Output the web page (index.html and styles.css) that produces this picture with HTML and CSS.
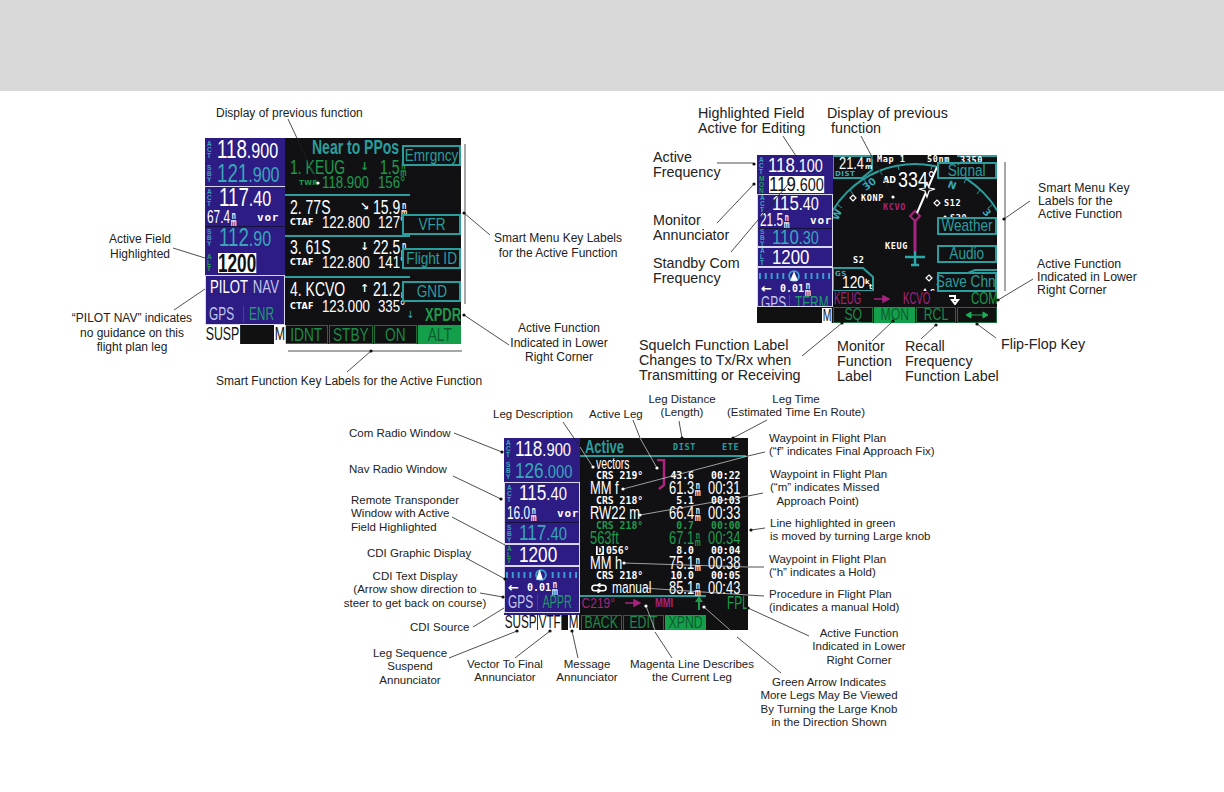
FILE: index.html
```html
<!DOCTYPE html>
<html lang="en">

<head>
    <meta charset="UTF-8">
    <title>Radio and flight plan pages</title>
    <link rel="stylesheet" href="styles.css">
</head>

<body>
    <div id="page">
        <div class="topband"></div>

        <!-- screen 1: nearest airports -->
        <div class="screen s1">
            <div class="radios">
                <div class="rbox h48">
                    <div class="fr"><span class="tag">ACT</span><span class="big w">118<small>.900</small></span></div>
                    <div class="fr"><span class="tag">SBY</span><span class="big t">121<small>.900</small></span></div>
                </div>
                <div class="rbox h65 tl">
                    <div class="fr r22"><span class="tag">ACT</span><span class="big w ind">117<small>.40</small></span></div>
                    <div class="info"><span class="mid w">67.4<i class="nm">n<br>m</i></span><span class="vor">vor</span></div>
                    <div class="fr r22"><span class="tag">SBY</span><span class="big t ind">112<small>.90</small></span></div>
                </div>
                <div class="rbox h24">
                    <div class="fr"><span class="tag g">ALT</span><span class="big sel">1200</span></div>
                </div>
                <div class="rbox h50 ol">
                    <div class="pn"><span class="mid w">PILOT <span class="t2">NAV</span></span></div>
                    <div class="src"><span class="mid t2">GPS</span><span class="mid gr2">ENR</span></div>
                </div>
            </div>
            <div class="data">
                <div class="title"><span class="nw">Near to PPos</span></div>
                <div class="apt a-top gn">
                    <div class="l1"><span class="nw">1. KEUG</span><span class="arr">&#8595;</span><span class="nw val">1.5<i class="nm">n<br>m</i></span></div>
                    <div class="l2"><b class="tw">TWR</b><span class="nw">118.900</span><span class="nw">156&deg;</span></div>
                </div>
                <div class="apt">
                    <div class="l1"><span class="nw">2. 77S</span><span class="arr">&#8600;</span><span class="nw">15.9<i class="nm">n<br>m</i></span></div>
                    <div class="l2"><b>CTAF</b><span class="nw">122.800</span><span class="nw">127&deg;</span></div>
                </div>
                <div class="apt a-3">
                    <div class="l1"><span class="nw">3. 61S</span><span class="arr">&#8595;</span><span class="nw">22.5<i class="nm">n<br>m</i></span></div>
                    <div class="l2"><b>CTAF</b><span class="nw">122.800</span><span class="nw">141&deg;</span></div>
                </div>
                <div class="apt last">
                    <div class="l1"><span class="nw">4. KCVO</span><span class="arr">&#8593;</span><span class="nw">21.2<i class="nm">n<br>m</i></span></div>
                    <div class="l2"><b>CTAF</b><span class="nw">123.000</span><span class="nw">335&deg;</span></div>
                </div>
            </div>
            <div class="botleft bl1"><span class="chip">SUSP</span><span class="chip">M</span></div>
            <div class="keys k4">
                <span><b>IDNT</b></span><span><b>STBY</b></span><span><b>ON</b></span><span class="on"><b>ALT</b></span>
            </div>
            <span class="mk e1"><b>Emrgncy</b></span>
            <span class="mk e2"><b>VFR</b></span>
            <span class="mk e3"><b>Flight ID</b></span>
            <span class="mk e4"><b>GND</b></span>
            <span class="xarr">&#8595;</span>
            <span class="xfn">XPDR</span>
        </div>

        <!-- screen 2: map with com active -->
        <div class="screen s2">
            <div class="radios">
                <div class="rbox h39">
                    <div class="fr r21"><span class="tag">ACT</span><span class="big w">118<small>.100</small></span></div>
                    <div class="fr r17"><span class="tag g">MON</span><span class="big sel">119<small>.600</small></span></div>
                </div>
                <div class="rbox h53 ol">
                    <div class="fr r17"><span class="tag">ACT</span><span class="big w ind">115<small>.40</small></span></div>
                    <div class="info"><span class="mid w">21.5<i class="nm">n<br>m</i></span><span class="vor">vor</span></div>
                    <div class="fr r17"><span class="tag">SBY</span><span class="big t ind">110<small>.30</small></span></div>
                </div>
                <div class="rbox h20 ol">
                    <div class="fr r18"><span class="tag">ALT</span><span class="big w ind">1200</span></div>
                </div>
                <div class="rbox h40 ol">
                    <svg class="cdi" viewBox="0 0 75 12"><g class="cdi-t"><path d="M2 3v6M8 3v6M14 3v6M20 3v6M26 3v6M49 3v6M55 3v6M61 3v6M67 3v6M73 3v6"/><circle cx="37" cy="6" r="5"/></g><path class="cdi-w" d="M37 1l4 10h-8z"/></svg>
                    <div class="xtk"><span class="lar">&#8592;</span><span class="mono">0.01</span><span class="nw"><i class="nm">n<br>m</i></span></div>
                    <div class="src"><span class="mid t2">GPS</span><span class="mid gr2">TERM</span></div>
                </div>
            </div>
            <div class="mapwrap">
                <svg class="map" viewBox="833 155 164 152">
                    <circle class="arc" cx="915" cy="260" r="96" />
                    <path class="tick" d="M838 205l4 3M850 190l3 4M864 179l2 4M880 171l2 4M898 166l1 4M932 166l-1 4M950 171l-2 4M966 179l-2 4M980 190l-3 4M992 205l-4 3" />
                    <path class="box" d="M833 156h39v14l-10 8h-29z" />
                    <path class="box" d="M957 156h40" />
                    <text class="sv w" x="839" y="169" textLength="25" lengthAdjust="spacingAndGlyphs">21.4</text>
                    <text class="tiny w" x="866" y="162">n</text>
                    <text class="tiny w" x="865" y="169">m</text>
                    <text class="tiny t" x="835" y="176">DIST</text>
                    <text class="lab" x="877" y="162">Map 1</text>
                    <text class="lab b" x="927" y="162">50nm</text>
                    <text class="lab" x="960" y="163">3350</text>
                    <text class="ad" x="883" y="183">AD</text>
                    <text class="hdg" x="898" y="187" textLength="37" lengthAdjust="spacingAndGlyphs">334&deg;</text>
                    <text class="nmb t" transform="translate(866 191) rotate(-38)">30</text>
                    <text class="nmb t" transform="translate(838 221) rotate(-68)">W</text>
                    <text class="nmb t" transform="translate(947 187) rotate(20)">N</text>
                    <text class="nmb t" transform="translate(982 212) rotate(50)">3</text>
                    <path class="wpt" d="M853 195l3 3-3 3-3-3zM937 200l3 3-3 3-3-3zM945 216l3 3-3 3-3-3zM929 275l3 3-3 3-3-3z" />
                    <text class="lab" x="861" y="201">KONP</text>
                    <text class="lab" x="944" y="206">S12</text>
                    <text class="lab" x="950" y="221">S20</text>
                    <text class="lab m" x="883" y="210">KCVO</text>
                    <text class="lab" x="885" y="249">KEUG</text>
                    <text class="lab" x="853" y="263">S2</text>
                    <text class="lab" x="930" y="296">SAL</text>
                    <path class="tri" d="M925 288l3 5h-6z" />
                    <path class="cse" d="M915 216v35" />
                    <path class="cse-d" d="M915 211l5 5-5 5-5-5z" />
                    <path class="trk" d="M917 213l20-46" />
                    <path class="wstar" d="M927 183l2 5 6 1-6 2-2 6-2-6-6-2 6-1z" />
                    <path class="plane" d="M905 257h20M915 251v14M911 265h8" />
                    <path class="box" d="M833 268h30l10 9v14h-40z" />
                    <path class="box" d="M968 273l7-3h22" />
                    <text class="tiny t" x="835" y="276">GS</text>
                    <text class="sv w" x="842" y="288" textLength="23" lengthAdjust="spacingAndGlyphs">120</text>
                    <text class="tiny w" x="865" y="284">k</text>
                    <text class="tiny w" x="869" y="289">t</text>
                </svg>
                <div class="legline">
                    <span class="mg nw">KEUG</span>
                    <svg class="mgarr" viewBox="0 0 16 8"><path d="M0 4h10M9 1l6 3-6 3z"/></svg>
                    <span class="mg nw">KCVO</span>
                    <svg class="turn" viewBox="0 0 11 11"><path d="M0 2h6v5M3 6h6l-3 4z"/></svg>
                    <span class="fn nw">COM</span>
                </div>
            </div>
            <div class="botleft bl2"><span></span><span class="chip">M</span></div>
            <div class="keys k4">
                <span><b>SQ</b></span><span class="on"><b>MON</b></span><span><b>RCL</b></span><span class="flip"><svg viewBox="0 0 22 8"><path d="M0 4l5-3v6zM22 4l-5-3v6zM4 4h14"/></svg></span>
            </div>
            <span class="mk m1"><b>Signal</b></span>
            <span class="mk m2"><b>Weather</b></span>
            <span class="mk m3"><b>Audio</b></span>
            <span class="mk m4"><b>Save Chnl</b></span>
        </div>

        <!-- screen 3: active flight plan -->
        <div class="screen s3">
            <div class="radios">
                <div class="rbox h44">
                    <div class="fr r22"><span class="tag">ACT</span><span class="big w">118<small>.900</small></span></div>
                    <div class="fr r22"><span class="tag">SBY</span><span class="big t">126<small>.000</small></span></div>
                </div>
                <div class="rbox h62 ol">
                    <div class="fr r21"><span class="tag">ACT</span><span class="big w ind">115<small>.40</small></span></div>
                    <div class="info"><span class="mid w">16.0<i class="nm">n<br>m</i></span><span class="vor">vor</span></div>
                    <div class="fr r21"><span class="tag">SBY</span><span class="big t ind">117<small>.40</small></span></div>
                </div>
                <div class="rbox h22 ol">
                    <div class="fr r20"><span class="tag g">ALT</span><span class="big w ind">1200</span></div>
                </div>
                <div class="rbox h47 ol">
                    <svg class="cdi" viewBox="0 0 75 12"><g class="cdi-t"><path d="M2 3v6M8 3v6M14 3v6M20 3v6M26 3v6M49 3v6M55 3v6M61 3v6M67 3v6M73 3v6"/><circle cx="37" cy="6" r="5"/></g><path class="cdi-w" d="M35 1h1l3 10h-7z"/></svg>
                    <div class="xtk"><span class="lar">&#8592;</span><span class="mono">0.01</span><span class="nw"><i class="nm">n<br>m</i></span></div>
                    <div class="src"><span class="mid t2">GPS</span><span class="mid gr2">APPR</span></div>
                </div>
            </div>
            <div class="fpl">
                <div class="fhead"><span class="ftitle nw">Active</span><span class="fcol d">DIST</span><span class="fcol">ETE</span></div>
                <div class="fvec"><span class="nw">vectors</span></div>
                <div class="frow"><span class="sm c">CRS 219&deg;</span><span class="sm r1">43.6</span><span class="sm r2">00:22</span></div>
                <div class="frow lg"><span class="nm1"><span class="nw">MM f</span></span><span><span class="nw">61.3<i class="nm">n<br>m</i></span></span><span><span class="nw">00:31</span></span></div>
                <div class="frow"><span class="sm c">CRS 218&deg;</span><span class="sm r1">5.1</span><span class="sm r2">00:03</span></div>
                <div class="frow lg"><span class="nm1"><span class="nw">RW22 m</span></span><span><span class="nw">66.4<i class="nm">n<br>m</i></span></span><span><span class="nw">00:33</span></span></div>
                <div class="frow gn"><span class="sm c">CRS 218&deg;</span><span class="sm r1">0.7</span><span class="sm r2">00:00</span></div>
                <div class="frow lg gn"><span class="nm1"><span class="nw">563ft</span></span><span><span class="nw">67.1<i class="nm">n<br>m</i></span></span><span><span class="nw">00:34</span></span></div>
                <div class="frow"><span class="sm c"><b class="dto">D</b>056&deg;</span><span class="sm r1">8.0</span><span class="sm r2">00:04</span></div>
                <div class="frow lg"><span class="nm1"><span class="nw">MM h</span></span><span><span class="nw">75.1<i class="nm">n<br>m</i></span></span><span><span class="nw">00:38</span></span></div>
                <div class="frow"><span class="sm c">CRS 218&deg;</span><span class="sm r1">10.0</span><span class="sm r2">00:05</span></div>
                <div class="frow lg"><span class="nm1 man"><svg class="hold" viewBox="0 0 19 10"><path d="M9 2H5a3 3 0 0 0 0 6h9a3 3 0 0 0 0-6h-4M11 0L8 2l3 2M8 6l3 2-3 2"/></svg><span class="nw">manual</span></span><span><span class="nw">85.1<i class="nm">n<br>m</i></span></span><span><span class="nw">00:43</span></span></div>
                <div class="fline"></div>
                <div class="fleg">
                    <span class="mg nw c219">C219&deg;</span>
                    <svg class="mgarr" viewBox="0 0 16 8"><path d="M0 4h10M9 1l6 3-6 3z"/></svg>
                    <span class="mg nw mh">MMI</span>
                    <svg class="uparr" viewBox="0 0 8 14"><path d="M4 0l4 6H5v8H3V6H0z"/></svg>
                    <span class="fn nw fp">FPL</span>
                </div>
            </div>
            <div class="botleft bl3"><span class="chip">SUSP</span><span class="chip">VTF</span><span class="chip">M</span></div>
            <div class="keys k3">
                <span><b>BACK</b></span><span><b>EDIT</b></span><span class="on"><b>XPND</b></span>
            </div>
            <svg class="bracket" viewBox="0 0 10 32"><path d="M1 1h7v25l-5 4"/></svg>
        </div>

        <!-- leader lines -->
        <svg class="leaders" viewBox="0 0 1224 792">
            <path class="ln" d="M288 119L318 183M173 248L205 258M174 310L205 289M465 144V304M464 213L490 235M464 315L509 345M288 351H462M371 351L347 372" />
            <circle cx="318" cy="183" r="1.6" class="dw" />
            <circle cx="464" cy="213" r="1.6" class="db" /><circle cx="464" cy="315" r="1.6" class="db" /><circle cx="371" cy="351" r="1.6" class="db" />

            <path class="ln" d="M783 136L796 156M717 163H753M717 223L754 184M731 252L790 182M861 136L893 197M1005 162V291M1004 219L1030 201M998 300L1033 279M802 356L842 323M872 341L893 321M921 339L936 325M977 324L996 338" />
            <circle cx="754" cy="164" r="1.6" class="db" /><circle cx="754" cy="184" r="1.6" class="db" /><circle cx="893" cy="197" r="1.6" class="dw" />
            <circle cx="1004" cy="219" r="1.6" class="db" /><circle cx="998" cy="300" r="1.6" class="db" /><circle cx="842" cy="323" r="1.6" class="db" />
            <circle cx="893" cy="321" r="1.6" class="db" /><circle cx="936" cy="325" r="1.6" class="db" /><circle cx="977" cy="324" r="1.6" class="db" />

            <path class="ln" d="M454 433L502 452M453 476L501 499M452 517L505 545M466 558L505 579M480 593L503 597M473 627L504 608M449 658L517 631M515 658L550 631M578 658L572 631" />
            <path class="ln" d="M563 422L580 447M633 420L640 438M679 421L682 438M767 420L733 438M765 452L748 456M763 493L748 496M751 530L765 528M764 567L748 567M764 596L748 595M748 608L809 636M737 637L781 673M655 632L672 658" />
            <path class="lw" d="M580 447L593 467M640 438L657 468M748 456L623 489M748 496L640 515M748 567L624 563M748 595L643 588M704 607L730 630M646 606L655 630" />
            <circle cx="502" cy="452" r="1.6" class="db" /><circle cx="501" cy="499" r="1.6" class="db" /><circle cx="505" cy="579" r="1.6" class="db" />
            <circle cx="503" cy="597" r="1.6" class="db" /><circle cx="517" cy="631" r="1.6" class="db" /><circle cx="550" cy="631" r="1.6" class="db" />
            <circle cx="572" cy="631" r="1.6" class="db" /><circle cx="682" cy="438" r="1.6" class="db" /><circle cx="733" cy="438" r="1.6" class="db" />
            <circle cx="751" cy="530" r="1.6" class="db" /><circle cx="748" cy="608" r="1.6" class="db" />
            <circle cx="593" cy="467" r="1.6" class="dw" /><circle cx="657" cy="468" r="1.6" class="dw" /><circle cx="623" cy="489" r="1.6" class="dw" />
            <circle cx="640" cy="515" r="1.6" class="dw" /><circle cx="624" cy="563" r="1.6" class="dw" /><circle cx="704" cy="607" r="1.6" class="dw" /><circle cx="646" cy="606" r="1.6" class="dw" />
        </svg>

        <!-- notes, screen 1 -->
        <p class="note n12 a1">Display of previous function</p>
        <p class="note n12 ctr a2">Active Field<br>Highlighted</p>
        <p class="note n12 ctr a3">&ldquo;PILOT NAV&rdquo; indicates<br>no guidance on this<br>flight plan leg</p>
        <p class="note n12 ctr a4">Smart Menu Key Labels<br>for the Active Function</p>
        <p class="note n12 ctr a5">Active Function<br>Indicated in Lower<br>Right Corner</p>
        <p class="note n12 a6">Smart Function Key Labels for the Active Function</p>

        <!-- notes, screen 2 -->
        <p class="note n13 b1">Highlighted Field<br>Active for Editing</p>
        <p class="note n13 b2">Display of previous<br>&nbsp;function</p>
        <p class="note n13 b3">Active<br>Frequency</p>
        <p class="note n13 b4">Monitor<br>Annunciator</p>
        <p class="note n13 b5">Standby Com<br>Frequency</p>
        <p class="note n13 b6">Squelch Function Label<br>Changes to Tx/Rx when<br>Transmitting or Receiving</p>
        <p class="note n13 b7">Monitor<br>Function<br>Label</p>
        <p class="note n13 b8">Recall<br>Frequency<br>Function Label</p>
        <p class="note n13 b9">Flip-Flop Key</p>
        <p class="note n115 b10">Smart Menu Key<br>Labels for the<br>Active Function</p>
        <p class="note n115 b11">Active Function<br>Indicated in Lower<br>Right Corner</p>

        <!-- notes, screen 3 -->
        <p class="note n11 c1">Com Radio Window</p>
        <p class="note n11 c2">Nav Radio Window</p>
        <p class="note n11 c3">Remote Transponder<br>Window with Active<br>Field Highlighted</p>
        <p class="note n11 c4">CDI Graphic Display</p>
        <p class="note n11 ctr c5">CDI Text Display<br>(Arrow show direction to<br>steer to get back on course)</p>
        <p class="note n11 c6">CDI Source</p>
        <p class="note n11 ctr c7">Leg Sequence<br>Suspend<br>Annunciator</p>
        <p class="note n11 ctr c8">Vector To Final<br>Annunciator</p>
        <p class="note n11 ctr c9">Message<br>Annunciator</p>
        <p class="note n11 c10">Leg Description</p>
        <p class="note n11 c11">Active Leg</p>
        <p class="note n11 ctr c12">Leg Distance<br>(Length)</p>
        <p class="note n11 ctr c13">Leg Time<br>(Estimated Time En Route)</p>
        <p class="note n11 c14">Waypoint in Flight Plan<br>(&ldquo;f&rdquo; indicates Final Approach Fix)</p>
        <p class="note n11 c15">Waypoint in Flight Plan<br>(&ldquo;m&rdquo; indicates Missed<br>&nbsp;&nbsp;Approach Point)</p>
        <p class="note n11 c16">Line highlighted in green<br>is moved by turning Large knob</p>
        <p class="note n11 c17">Waypoint in Flight Plan<br>(&ldquo;h&rdquo; indicates a Hold)</p>
        <p class="note n11 c18">Procedure in Flight Plan<br>(indicates a manual Hold)</p>
        <p class="note n11 ctr c19">Active Function<br>Indicated in Lower<br>Right Corner</p>
        <p class="note n11 ctr c20">Magenta Line Describes<br>the Current Leg</p>
        <p class="note n11 ctr c21">Green Arrow Indicates<br>More Legs May Be Viewed<br>By Turning the Large Knob<br>in the Direction Shown</p>
    </div>
</body>

</html>
```

FILE: styles.css
```css
* {
    margin: 0;
    padding: 0;
    box-sizing: border-box;
}

body {
    background: #fff;
    font-family: "Liberation Sans", Arial, sans-serif;
}

#page {
    position: relative;
    width: 1224px;
    height: 792px;
    overflow: hidden;
}

.topband {
    height: 91px;
    background: #d9d9d9;
}

/* notes around the screens */
.note {
    position: absolute;
    color: #222;
    white-space: nowrap;
}

.ctr {
    text-align: center;
}

.n12 { font-size: 12px; line-height: 14.5px; }
.n13 { font-size: 14.3px; line-height: 15.2px; }
.n115 { font-size: 12.3px; line-height: 13px; }
.n11 { font-size: 11.5px; line-height: 13.4px; }

.a1 { left: 216px; top: 106px; }
.a2 { left: 90px; width: 100px; top: 232px; }
.a3 { left: 62px; width: 140px; top: 311px; }
.a4 { left: 488px; width: 140px; top: 231px; }
.a5 { left: 489px; width: 140px; top: 321px; }
.a6 { left: 216px; top: 374px; }

.b1 { left: 698px; top: 106px; }
.b2 { left: 827px; top: 106px; }
.b3 { left: 653px; top: 150px; }
.b4 { left: 653px; top: 213px; }
.b5 { left: 653px; top: 256px; }
.b6 { left: 639px; top: 338px; }
.b7 { left: 837px; top: 339px; }
.b8 { left: 905px; top: 339px; }
.b9 { left: 1001px; top: 337px; }
.b10 { left: 1038px; top: 182px; }
.b11 { left: 1037px; top: 258px; }

.c1 { left: 349px; top: 427px; }
.c2 { left: 349px; top: 463px; }
.c3 { left: 351px; top: 494px; }
.c4 { left: 367px; top: 547px; }
.c5 { left: 335px; width: 160px; top: 570px; }
.c6 { left: 410px; top: 621px; }
.c7 { left: 360px; width: 100px; top: 647px; }
.c8 { left: 455px; width: 100px; top: 658px; }
.c9 { left: 537px; width: 100px; top: 658px; }
.c10 { left: 493px; top: 408px; }
.c11 { left: 589px; top: 408px; }
.c12 { left: 632px; width: 100px; top: 393px; }
.c13 { left: 711px; width: 170px; top: 393px; }
.c14 { left: 769px; top: 432px; }
.c15 { left: 770px; top: 468px; }
.c16 { left: 770px; top: 517px; }
.c17 { left: 769px; top: 553px; }
.c18 { left: 769px; top: 588px; }
.c19 { left: 799px; width: 120px; top: 627px; }
.c20 { left: 622px; width: 140px; top: 658px; }
.c21 { left: 759px; width: 140px; top: 676px; }

/* leader lines */
.leaders {
    position: absolute;
    left: 0;
    top: 0;
    width: 1224px;
    height: 792px;
    pointer-events: none;
}

.ln { fill: none; stroke: #222; stroke-width: 0.8; }
.lw { fill: none; stroke: #ddd; stroke-width: 0.7; }
.db { fill: #111; }
.dw { fill: #fff; }

/* screens */
.screen {
    position: absolute;
    display: grid;
    background: #111114;
    color: #fff;
    overflow: hidden;
}

.s1 {
    left: 205px;
    top: 138px;
    width: 256px;
    height: 206px;
    grid-template-columns: 80px minmax(0, 1fr);
    grid-template-rows: 187px 19px;
    --big: 26px;
    --bigsx: 0.72;
    --srccol: 39px;
}

.s2 {
    left: 757px;
    top: 155px;
    width: 240px;
    height: 168px;
    grid-template-columns: 76px minmax(0, 1fr);
    grid-template-rows: 152px 16px;
    --big: 21px;
    --bigsx: 0.8;
    --srccol: 33px;
}

.s3 {
    left: 504px;
    top: 438px;
    width: 244px;
    height: 192px;
    grid-template-columns: 76px minmax(0, 1fr);
    grid-template-rows: 177px 15px;
    --big: 22px;
    --bigsx: 0.78;
    --srccol: 34px;
}

/* text squeezed sideways, the unit's font is narrow */
.nw, .big, .mid, .chip {
    display: inline-block;
    white-space: nowrap;
    transform: scaleX(var(--sx, 0.7));
    transform-origin: left center;
}

/* radio column */
.radios {
    display: flex;
    flex-direction: column;
    background: #2c1c84;
}

.rbox {
    display: flex;
    flex-direction: column;
    overflow: hidden;
    flex: none;
}

.ol { border: 1px solid #d8d8e8; }
.tl { border-top: 1px solid #d8d8e8; }
.h48 { height: 48px; }
.h65 { height: 65px; }
.h24 { height: 24px; }
.h50 { height: 50px; }
.h39 { height: 39px; }
.h53 { height: 53px; }
.h20 { height: 20px; }
.h40 { height: 40px; }
.h44 { height: 44px; }
.h62 { height: 62px; }
.h22 { height: 22px; }
.h47 { height: 47px; }

.fr {
    display: flex;
    align-items: center;
    height: 24px;
    padding-left: 2px;
    flex: none;
}

.r22 { height: 22px; }
.r21 { height: 21px; }
.r20 { height: 20px; }
.r18 { height: 18px; }
.r17 { height: 17px; }

.tag {
    display: block;
    width: 6px;
    flex: none;
    font-size: 6.5px;
    line-height: 6px;
    font-weight: bold;
    color: #3aa6b8;
    word-break: break-all;
}

.tag.g { color: #25a050; }

.big {
    flex: none;
    margin-left: 4px;
    font-size: var(--big);
    line-height: 20px;
    --sx: var(--bigsx);
}

.s3 .big, .s2 .big { margin-left: 3px; }
.big small { font-size: 0.86em; }
.big.ind { margin-left: 6px; }
.w { color: #fff; fill: #fff; }
.t { color: #3aa6b8; fill: #3aa6b8; }

.sel {
    --sx: 0.66;
    background: #fff;
    color: #111;
    font-weight: bold;
    line-height: 20px;
    margin-left: 5px;
}

.s2 .sel { --sx: 0.8; margin-left: 4px; font-weight: normal; line-height: 16px; }

.info {
    display: grid;
    grid-template-columns: 50px 1fr;
    align-items: center;
    height: 18px;
    padding-left: 2px;
    border-bottom: 1px solid #14123c;
    flex: none;
}

.s2 .info { height: 17px; }
.s3 .info { height: 19px; }

.mid {
    --sx: 0.66;
    font-size: 18px;
    line-height: 16px;
}

.t2 { color: #c0c6e8; }

.gr2 {
    color: #1f9a66;
    margin-left: -5px;
    padding-left: 8px;
    border-left: 1px solid #2d6a9a;
}

.s3 .gr2 { --sx: 0.6; }

.nm {
    display: inline-block;
    font-style: normal;
    font-size: 10px;
    line-height: 7px;
    font-weight: bold;
    vertical-align: middle;
    text-align: center;
    margin-left: 1px;
}

.vor {
    font-family: "DejaVu Sans Mono", monospace;
    font-size: 11px;
    font-weight: bold;
    letter-spacing: 0.8px;
}

.pn {
    padding: 3px 0 0 4px;
    word-spacing: 2px;
}

.pn .mid { --sx: 0.73; }

.src {
    display: grid;
    grid-template-columns: var(--srccol) 1fr;
    align-items: center;
    margin-top: auto;
    padding: 0 0 2px 3px;
}

.cdi {
    display: block;
    width: 73px;
    height: 12px;
    margin-top: 2px;
    flex: none;
}

.cdi-t { fill: none; stroke: #3a9fd0; stroke-width: 2; }
.cdi-w { fill: #fff; }

.xtk {
    display: flex;
    align-items: center;
    height: 13px;
    padding-left: 3px;
    flex: none;
}

.lar {
    width: 19px;
    flex: none;
    font-family: "DejaVu Sans", sans-serif;
    font-size: 13px;
    font-weight: bold;
}

.mono {
    width: 24px;
    flex: none;
    font-family: "DejaVu Sans Mono", monospace;
    font-size: 10px;
    font-weight: bold;
}

/* bottom row */
.botleft {
    display: grid;
    background: #111;
}

.bl1 { grid-template-columns: 69px 1fr; }
.bl2 { grid-template-columns: 65px 1fr; }
.bl3 { grid-template-columns: 34px 30px 1fr; }

.chip {
    --sx: 0.65;
    width: max-content;
    background: #fff;
    color: #111;
    font-size: 19px;
    line-height: 18px;
    padding: 0 1px;
}

.s2 .chip { font-size: 16px; line-height: 15px; margin-top: 1px; }
.s3 .chip { font-size: 18px; line-height: 14px; }

.keys {
    display: grid;
    gap: 1px;
    background: #111;
    min-width: 0;
}

.k4 { grid-template-columns: repeat(4, minmax(0, 1fr)); }
.k3 { grid-template-columns: repeat(3, 41px) minmax(0, 1fr); padding-left: 1px; }

.keys > span {
    display: flex;
    align-items: center;
    justify-content: center;
    border: 1px solid #1d6e3c;
    color: #1e8a4b;
    font-size: 19px;
    line-height: 14px;
    min-width: 0;
}

.s3 .keys > span { font-size: 17px; }
.s2 .keys > span { font-size: 17px; }

.keys b {
    display: block;
    flex: none;
    font-weight: normal;
    white-space: nowrap;
    transform: scaleX(0.72);
}

.keys .on {
    background: #14a04a;
    color: #0c5c2e;
    border-color: #14a04a;
}

.flip svg { width: 22px; height: 8px; fill: #1fae56; stroke: #1fae56; }

/* overlay keys and function names */
.mk {
    position: absolute;
    display: flex;
    align-items: center;
    justify-content: center;
    background: #111114;
    border: 2px solid #2a9d9d;
    color: #2a9d9d;
    font-size: 17px;
    white-space: nowrap;
}

.mk b {
    display: block;
    flex: none;
    font-weight: normal;
    transform: scaleX(0.8);
}

.e1 { left: 197px; top: 7px; width: 59px; height: 21px; }
.e2 { left: 197px; top: 76px; width: 59px; height: 21px; }
.e3 { left: 197px; top: 110px; width: 59px; height: 21px; }
.e4 { left: 197px; top: 143px; width: 59px; height: 21px; }

.m1 { left: 180px; top: 7px; width: 60px; height: 17px; }
.m2 { left: 180px; top: 62px; width: 60px; height: 18px; }
.m3 { left: 180px; top: 90px; width: 60px; height: 18px; }
.m4 { left: 180px; top: 117px; width: 60px; height: 20px; }

.fn {
    color: #1e9a4c;
    font-size: 18px;
    font-weight: bold;
}

.xfn {
    position: absolute;
    left: 220px;
    top: 169px;
    color: #1e9a4c;
    font-size: 18px;
    font-weight: bold;
    line-height: 16px;
    transform: scaleX(0.72);
    transform-origin: left center;
}

.xarr {
    position: absolute;
    left: 201px;
    top: 171px;
    font-family: "DejaVu Sans", sans-serif;
    font-size: 10px;
    line-height: 12px;
    color: #3aa6b8;
}

/* nearest list */
.data {
    display: flex;
    flex-direction: column;
}

.title {
    height: 19px;
    padding-left: 27px;
    color: #2a9d9d;
    font-size: 20px;
    font-weight: bold;
    line-height: 19px;
    flex: none;
}

.apt {
    width: 125px;
    height: 41px;
    padding: 2px 0 0 5px;
    border-bottom: 2px solid #2a9d9d;
    flex: none;
    color: #fff;
}

.apt.a-top { height: 39px; padding-top: 1px; color: #1e9a4c; }
.apt.a-3 { padding-top: 1px; }
.apt.last { border-bottom: 0; }

.gn { color: #1e9a4c; fill: #1e9a4c; }

.l1 {
    display: grid;
    grid-template-columns: 70px 13px 1fr;
    align-items: center;
    height: 18px;
    font-size: 20px;
    line-height: 18px;
}

.l1 .val { margin-left: 7px; }

.arr {
    font-family: "DejaVu Sans", sans-serif;
    font-size: 11px;
    font-weight: bold;
}

.l2 {
    display: grid;
    grid-template-columns: 32px 56px 1fr;
    align-items: center;
    height: 14px;
    font-size: 17px;
    line-height: 14px;
    --sx: 0.78;
}

.last .l2 { margin-top: 2px; }

.l2 b {
    font-family: "DejaVu Sans", sans-serif;
    font-size: 8px;
    letter-spacing: 0.4px;
}

.l2 .tw { padding-left: 9px; font-size: 7px; }

/* map */
.mapwrap {
    display: flex;
    flex-direction: column;
}

.map {
    display: block;
    width: 164px;
    height: 152px;
    margin-bottom: -16px;
    flex: none;
}

.legline {
    display: grid;
    grid-template-columns: 40px 29px 46px 22px 1fr;
    align-items: center;
    height: 16px;
    padding-left: 1px;
    font-size: 16px;
    line-height: 16px;
    background: #111114;
    position: relative;
}

.legline .mg { --sx: 0.6; }
.legline .fn { --sx: 0.68; font-size: 17px; font-weight: normal; }
.mg { color: #a8237f; }
.mgarr { width: 16px; height: 8px; fill: #a8237f; stroke: #a8237f; stroke-width: 1.5; flex: none; }
.turn { width: 11px; height: 11px; fill: none; stroke: #fff; stroke-width: 2; flex: none; }

.arc { fill: none; stroke: #2a9d9d; stroke-width: 2; }
.tick { fill: none; stroke: #2a9d9d; stroke-width: 1; }
.box { fill: none; stroke: #2a9d9d; stroke-width: 2; }
.sv { font-size: 17px; }
.tiny { font-family: "DejaVu Sans", sans-serif; font-size: 7px; font-weight: bold; letter-spacing: 0.5px; }
.ad { font-family: "DejaVu Sans", sans-serif; font-size: 8px; font-weight: bold; fill: #fff; }
.lab { font-family: "DejaVu Sans Mono", monospace; font-size: 8.5px; font-weight: bold; fill: #fff; letter-spacing: 0.6px; }
.lab.m { fill: #a8237f; }
.hdg { font-size: 22px; fill: #fff; }
.nmb { font-family: "DejaVu Sans", sans-serif; font-size: 10px; font-weight: bold; }
.wpt { fill: #111; stroke: #fff; stroke-width: 1.2; }
.tri { fill: #fff; }
.cse { fill: none; stroke: #a8237f; stroke-width: 3; }
.cse-d { fill: #111; stroke: #a8237f; stroke-width: 2; }
.trk { fill: none; stroke: #fff; stroke-width: 2; }
.wstar { fill: #111; stroke: #fff; stroke-width: 1.2; }
.plane { fill: none; stroke: #2aa8a8; stroke-width: 2.5; }

/* flight plan */
.fpl {
    position: relative;
    display: flex;
    flex-direction: column;
}

.fhead {
    display: grid;
    grid-template-columns: 93px 49px 1fr;
    align-items: center;
    height: 19px;
    margin-right: 2px;
    border-bottom: 2px solid #2a9d9d;
    flex: none;
}

.ftitle {
    margin-left: 5px;
    color: #2a9d9d;
    font-size: 18px;
    font-weight: bold;
    line-height: 16px;
    --sx: 0.72;
}

.fcol {
    font-family: "DejaVu Sans Mono", monospace;
    font-size: 8.5px;
    font-weight: bold;
    color: #2a9d9d;
    letter-spacing: 0.6px;
}

.fvec {
    height: 13px;
    padding-left: 16px;
    font-size: 16px;
    line-height: 13px;
    --sx: 0.65;
    flex: none;
}

.frow {
    display: grid;
    grid-template-columns: 89px 39px 1fr;
    grid-template-rows: 100%;
    align-items: center;
    height: 11px;
    white-space: nowrap;
    flex: none;
}

.sm {
    font-family: "DejaVu Sans Mono", monospace;
    font-size: 9.8px;
    line-height: 11px;
    font-weight: bold;
}

.frow .c { padding-left: 16px; }
.frow .r1 { width: 25px; text-align: right; }
.frow .r2 { padding-left: 3px; }

.frow.lg {
    height: 14px;
    font-size: 19px;
    line-height: 14px;
    --sx: 0.68;
}

.nm1 { padding-left: 10px; }

.man {
    display: flex;
    align-items: center;
    gap: 4px;
    font-size: 16px;
    --sx: 0.75;
}

.hold { width: 18px; height: 10px; fill: none; stroke: #fff; stroke-width: 1.6; flex: none; }

.dto {
    display: inline-block;
    margin-right: 2px;
    background: #fff;
    color: #111;
    padding: 0 1px;
    line-height: 9px;
}

.fline {
    width: 126px;
    height: 2px;
    background: #2a9d9d;
    flex: none;
}

.fleg {
    display: grid;
    grid-template-columns: 45px 30px 40px 30px 1fr;
    grid-template-rows: 100%;
    align-items: center;
    height: 12px;
    font-size: 15px;
    line-height: 12px;
    flex: none;
}

.c219 { --sx: 0.8; padding-left: 2px; }
.mh { --sx: 0.72; font-size: 13px; font-weight: bold; }
.uparr { width: 8px; height: 14px; fill: #1e9a4c; margin-left: 0; }
.fp { --sx: 0.62; font-weight: normal; font-size: 19px; margin-left: 2px; }

.bracket {
    position: absolute;
    left: 152px;
    top: 21px;
    width: 10px;
    height: 32px;
    fill: none;
    stroke: #b0247f;
    stroke-width: 2.5;
}
```
